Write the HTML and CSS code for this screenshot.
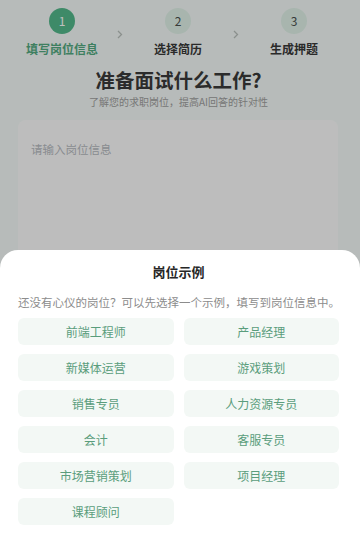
FILE: index.html
```html
<!DOCTYPE html>
<html lang="zh-CN">

<head>
    <meta charset="UTF-8">
    <meta name="viewport" content="width=device-width, initial-scale=1.0">
    <title>模拟面试</title>
    <link rel="stylesheet" href="styles.css">
</head>

<body>
    <div class="page">
        <div class="steps">
            <div class="step active">
                <span class="num">1</span>
                <span class="label">填写岗位信息</span>
            </div>
            <div class="arrow">
                <svg width="6" height="9" viewBox="0 0 6 9"><polyline points="1,1 4.5,4.5 1,8" fill="none" stroke="currentColor" stroke-width="1.3"/></svg>
            </div>
            <div class="step">
                <span class="num">2</span>
                <span class="label">选择简历</span>
            </div>
            <div class="arrow">
                <svg width="6" height="9" viewBox="0 0 6 9"><polyline points="1,1 4.5,4.5 1,8" fill="none" stroke="currentColor" stroke-width="1.3"/></svg>
            </div>
            <div class="step">
                <span class="num">3</span>
                <span class="label">生成押题</span>
            </div>
        </div>

        <div class="intro">
            <h1 class="title">准备面试什么工作?</h1>
            <p class="subtitle">了解您的求职岗位，提高AI回答的针对性</p>
        </div>

        <div class="job-input">
            <textarea placeholder="请输入岗位信息"></textarea>
        </div>
    </div>

    <!-- 遮罩 + 底部弹层 -->
    <div class="mask"></div>
    <div class="sheet">
        <h2 class="sheet-title">岗位示例</h2>
        <p class="sheet-desc">还没有心仪的岗位？可以先选择一个示例，填写到岗位信息中。</p>
        <div class="examples">
            <a href="javascript:;">前端工程师</a>
            <a href="javascript:;">产品经理</a>
            <a href="javascript:;">新媒体运营</a>
            <a href="javascript:;">游戏策划</a>
            <a href="javascript:;">销售专员</a>
            <a href="javascript:;">人力资源专员</a>
            <a href="javascript:;">会计</a>
            <a href="javascript:;">客服专员</a>
            <a href="javascript:;">市场营销策划</a>
            <a href="javascript:;">项目经理</a>
            <a href="javascript:;">课程顾问</a>
        </div>
    </div>
</body>

</html>
```

FILE: styles.css
```css
* {
    box-sizing: border-box;
    margin: 0;
    padding: 0;
}

html,
body {
    height: 100%;
    overflow: hidden;
}

body {
    font-family: "Noto Sans CJK SC", "Noto Sans", sans-serif;
    background: #f5faf8;
    color: #383838;
}

.steps {
    display: grid;
    grid-template-columns: 1fr 8px 1fr 8px 1fr;
    padding: 8px 12px 0 8px;
}

.step {
    display: flex;
    flex-direction: column;
    align-items: center;
}

.step .num {
    width: 26px;
    height: 26px;
    border-radius: 50%;
    background: #e0f2e9;
    color: #4a4f4c;
    font-size: 12px;
    line-height: 26px;
    text-align: center;
}

.step .label {
    margin-top: 7px;
    font-size: 12px;
    line-height: 16px;
    font-weight: 700;
    color: #393939;
}

.step.active .num {
    background: #53b88b;
    color: #fff;
}

.step.active .label {
    color: #53aa81;
}

.arrow {
    display: flex;
    justify-content: center;
    padding-top: 22px;
    color: #b9c0bc;
}

.intro {
    padding: 9px 21px 0 18px;
    text-align: center;
}

.title {
    font-size: 19.5px;
    line-height: 28px;
    font-weight: 700;
    color: #3a3a3a;
}

.subtitle {
    font-size: 10px;
    line-height: 15px;
    color: #a0a0a0;
}

.job-input {
    padding: 11px 22px 0 18px;
}

.job-input textarea {
    display: block;
    width: 100%;
    height: 220px;
    padding: 21px 13px;
    border: 0;
    border-radius: 8px;
    background: #fdfdfd;
    font-family: inherit;
    font-size: 11.5px;
    resize: none;
    outline: none;
}

.job-input textarea::placeholder {
    color: #b6bac0;
}

.mask {
    position: fixed;
    left: 0;
    top: 0;
    right: 0;
    bottom: 0;
    background: rgba(0, 0, 0, 0.25);
}

.sheet {
    position: fixed;
    left: 0;
    right: 0;
    bottom: 0;
    padding: 13px 21px 19px 18px;
    background: #fff;
    border-radius: 18px 18px 0 0;
}

.sheet-title {
    text-align: center;
    font-size: 13px;
    line-height: 18px;
    font-weight: 700;
    color: #262626;
}

.sheet-desc {
    margin-top: 13px;
    font-size: 11.5px;
    line-height: 16px;
    color: #8c8c8c;
    white-space: nowrap;
}

.examples {
    display: grid;
    grid-template-columns: 1fr 1fr;
    gap: 9px 10px;
    margin-top: 8px;
}

.examples a {
    display: block;
    height: 27px;
    line-height: 27px;
    border-radius: 6px;
    background: #f3f8f5;
    color: #5a9d7c;
    font-size: 12px;
    text-align: center;
    text-decoration: none;
}
```
